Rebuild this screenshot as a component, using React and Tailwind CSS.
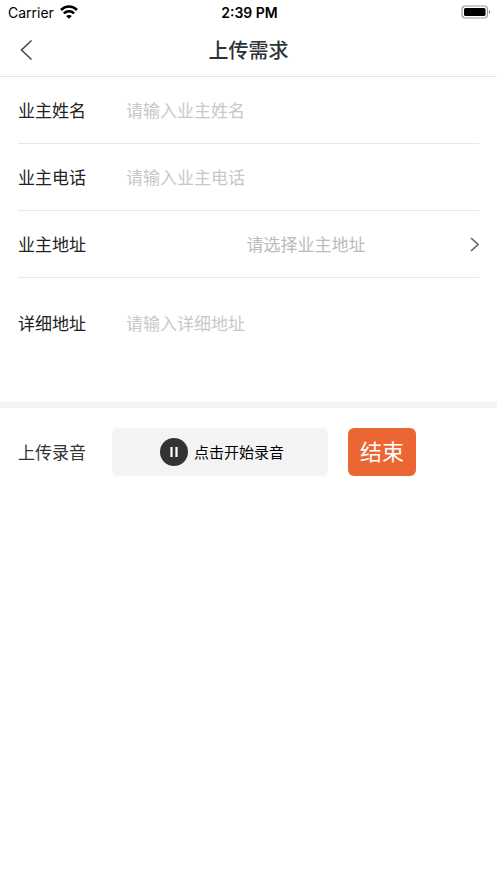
import { useState } from 'react'

const contactFields = [
  { id: 'ownerName', label: '业主姓名', placeholder: '请输入业主姓名', type: 'text' },
  { id: 'ownerPhone', label: '业主电话', placeholder: '请输入业主电话', type: 'tel' },
]

const inputStyle = 'min-w-0 flex-1 bg-transparent p-0 leading-6 text-[#222] outline-none placeholder:text-[#c8c8c8]'

function WifiIcon() {
  return (
    <svg width="18" height="14" viewBox="0 0 18 14" fill="none" stroke="#000" strokeWidth="2.6" aria-hidden="true">
      <path d="M1 5C5.4.4 12.6.4 17 5" />
      <path d="M3.9 8.4c2.9-2.8 7.3-2.8 10.2 0" />
      <path d="M9 13.8 6.1 11c1.6-1.5 4.2-1.5 5.8 0z" fill="#000" stroke="none" />
    </svg>
  )
}

function BatteryIcon() {
  return (
    <svg width="30" height="14" viewBox="0 0 30 14" aria-hidden="true">
      <rect x="1" y="1" width="25.5" height="12" rx="3.5" fill="none" stroke="#999" strokeWidth="1.2" />
      <rect x="3" y="3" width="21.5" height="8" rx="1.5" fill="#000" />
      <path d="M28 5c1.6.5 1.6 3.5 0 4z" fill="#888" />
    </svg>
  )
}

function StatusBar() {
  return (
    <div className="grid h-6 grid-cols-3 items-center pr-1.5 pl-2 font-[Inter,sans-serif] text-[14px] text-black">
      <div className="flex items-center gap-1.5">
        <span>Carrier</span>
        <WifiIcon />
      </div>
      <span className="text-center font-semibold">2:39 PM</span>
      <div className="flex justify-end">
        <BatteryIcon />
      </div>
    </div>
  )
}

function Header() {
  return (
    <header className="grid h-[53px] grid-cols-[48px_1fr_48px] items-center border-b border-[#e5e5e5]">
      <button type="button" aria-label="返回" className="flex h-full items-center pl-5">
        <svg width="13" height="22" viewBox="0 0 13 22" fill="none" stroke="#444" strokeWidth="1.5" aria-hidden="true">
          <path d="M11.5 1.5 1.5 11l10 9.5" />
        </svg>
      </button>
      <h1 className="text-center text-[20px] font-medium text-[#2d3336]">上传需求</h1>
    </header>
  )
}

function FieldRow({ id, label, children }) {
  return (
    <div className="flex h-[67px] items-center border-b border-[#e8e8e8]">
      <label htmlFor={id} className="w-27 shrink-0">{label}</label>
      {children}
    </div>
  )
}

export default function App() {
  const [recording, setRecording] = useState(false)

  return (
    <div className="min-h-screen bg-white font-['Noto_Sans_CJK_SC',sans-serif] text-[17px] text-[#222]">
      <StatusBar />
      <Header />

      <form onSubmit={e => e.preventDefault()}>
        <div className="px-[18px]">
          {contactFields.map(f => (
            <FieldRow key={f.id} id={f.id} label={f.label}>
              <input id={f.id} name={f.id} type={f.type} placeholder={f.placeholder} className={inputStyle} />
            </FieldRow>
          ))}

          <FieldRow id="ownerAddress" label="业主地址">
            <select id="ownerAddress" name="ownerAddress" defaultValue="" className="ml-4 min-w-0 flex-1 appearance-none bg-transparent text-center text-[#bbb] outline-none">
              <option value="">请选择业主地址</option>
            </select>
            <svg width="9" height="15" viewBox="0 0 9 15" fill="none" stroke="#666" strokeWidth="1.6" aria-hidden="true">
              <path d="m1 1 7 6.5L1 14" />
            </svg>
          </FieldRow>

          <div className="flex items-start pt-[33px]">
            <label htmlFor="detail" className="w-27 shrink-0 leading-6">详细地址</label>
            <textarea id="detail" name="detail" placeholder="请输入详细地址" className={`h-[91px] resize-none ${inputStyle}`} />
          </div>
        </div>

        {/* Recording */}
        <div className="flex items-center border-t-6 border-[#f4f4f4] px-[18px] pt-5">
          <span className="w-[94px] shrink-0 text-[#333]">上传录音</span>
          <button type="button" aria-pressed={recording} onClick={() => setRecording(!recording)}
            className="flex h-12 w-[216px] items-center justify-center gap-1.5 rounded-md bg-[#f4f4f4] pl-1 text-[15px] text-black">
            <svg width="28" height="28" viewBox="0 0 28 28" aria-hidden="true">
              <circle cx="14" cy="14" r="14" fill="#333" />
              <path d="M11.5 9v10M16.5 9v10" stroke="#fff" strokeWidth="2.2" />
            </svg>
            点击开始录音
          </button>
          <button type="button" onClick={() => setRecording(false)} className="ml-5 h-12 w-[68px] rounded-md bg-[#eb6632] pb-1 text-[22px] text-white">
            结束
          </button>
        </div>
      </form>
    </div>
  )
}
